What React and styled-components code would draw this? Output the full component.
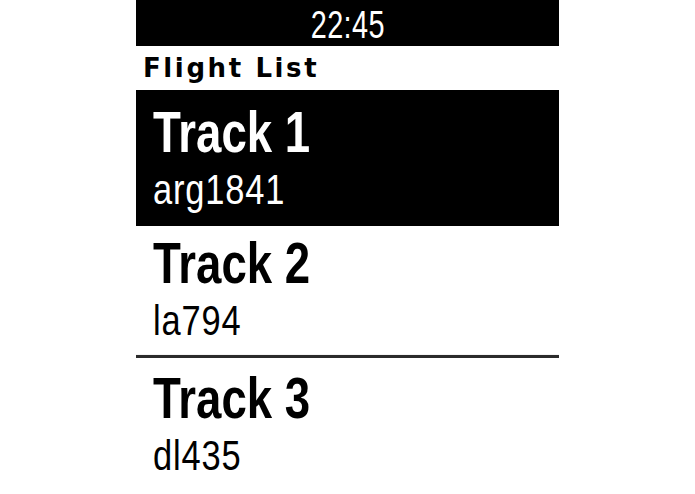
import React from "react";
import styled, { createGlobalStyle } from "styled-components";

const GlobalStyle = createGlobalStyle`
  html, body {
    margin: 0;
    padding: 0;
    background: #ffffff;
  }
  #root {
    width: 695px;
    height: 494px;
    overflow: hidden;
  }
`;

const Page = styled.div`
  width: 695px;
  height: 494px;
  display: flex;
  justify-content: center;
  background: #ffffff;
`;

const Screen = styled.div`
  width: 423px;
  height: 494px;
  display: flex;
  flex-direction: column;
  overflow: hidden;
  background: #ffffff;
`;

const StatusBar = styled.div`
  height: 46px;
  flex: none;
  box-sizing: border-box;
  padding-top: 6px;
  display: flex;
  justify-content: center;
  background: #000000;
  color: #ffffff;
`;

/* narrow face: Arial metrics squeezed horizontally */
const Clock = styled.span`
  display: inline-block;
  font-family: "Liberation Sans", Arial, sans-serif;
  font-size: 38px;
  line-height: 38px;
  letter-spacing: 0.5px;
  transform: scaleX(0.76);
`;

const Header = styled.div`
  height: 44px;
  flex: none;
  box-sizing: border-box;
  padding: 9px 0 0 7px;
  color: #000000;
  font-family: "DejaVu Sans", sans-serif;
  font-weight: bold;
  font-size: 26px;
  line-height: 26px;
  letter-spacing: 2.6px;
  white-space: nowrap;
`;

const Cell = styled.div`
  height: ${(p) => p.$height}px;
  flex: none;
  box-sizing: border-box;
  padding: ${(p) => p.$top}px 0 0 17px;
  display: flex;
  flex-direction: column;
  align-items: flex-start;
  gap: 8px;
  background: ${(p) => (p.$selected ? "#000000" : "#ffffff")};
  color: ${(p) => (p.$selected ? "#ffffff" : "#000000")};
  font-family: "Liberation Sans", Arial, sans-serif;
`;

const CellTitle = styled.div`
  font-weight: bold;
  font-size: 57px;
  line-height: 57px;
  white-space: nowrap;
  transform: scaleX(0.8);
  transform-origin: left center;
`;

const CellSubtitle = styled.div`
  font-size: 42px;
  line-height: 42px;
  letter-spacing: 1px;
  white-space: nowrap;
  transform: scaleX(0.82);
  transform-origin: left center;
`;

const Separator = styled.div`
  height: 3px;
  flex: none;
  background: #2b2b2b;
  box-shadow: 0 0 1px #8a8a8a;
`;

const tracks = [
  { title: "Track 1", sub: "arg1841", selected: true, height: 136, top: 14 },
  { title: "Track 2", sub: "la794", selected: false, height: 129, top: 9 },
  { title: "Track 3", sub: "dl435", selected: false, height: 136, top: 12 },
];

export default function App() {
  return (
    <Page>
      <GlobalStyle />
      <Screen>
        <StatusBar>
          <Clock>22:45</Clock>
        </StatusBar>
        <Header>Flight List</Header>
        {tracks.map((t, i) => (
          <React.Fragment key={t.title}>
            {i === 2 && <Separator />}
            <Cell $selected={t.selected} $height={t.height} $top={t.top}>
              <CellTitle>{t.title}</CellTitle>
              <CellSubtitle>{t.sub}</CellSubtitle>
            </Cell>
          </React.Fragment>
        ))}
      </Screen>
    </Page>
  );
}
